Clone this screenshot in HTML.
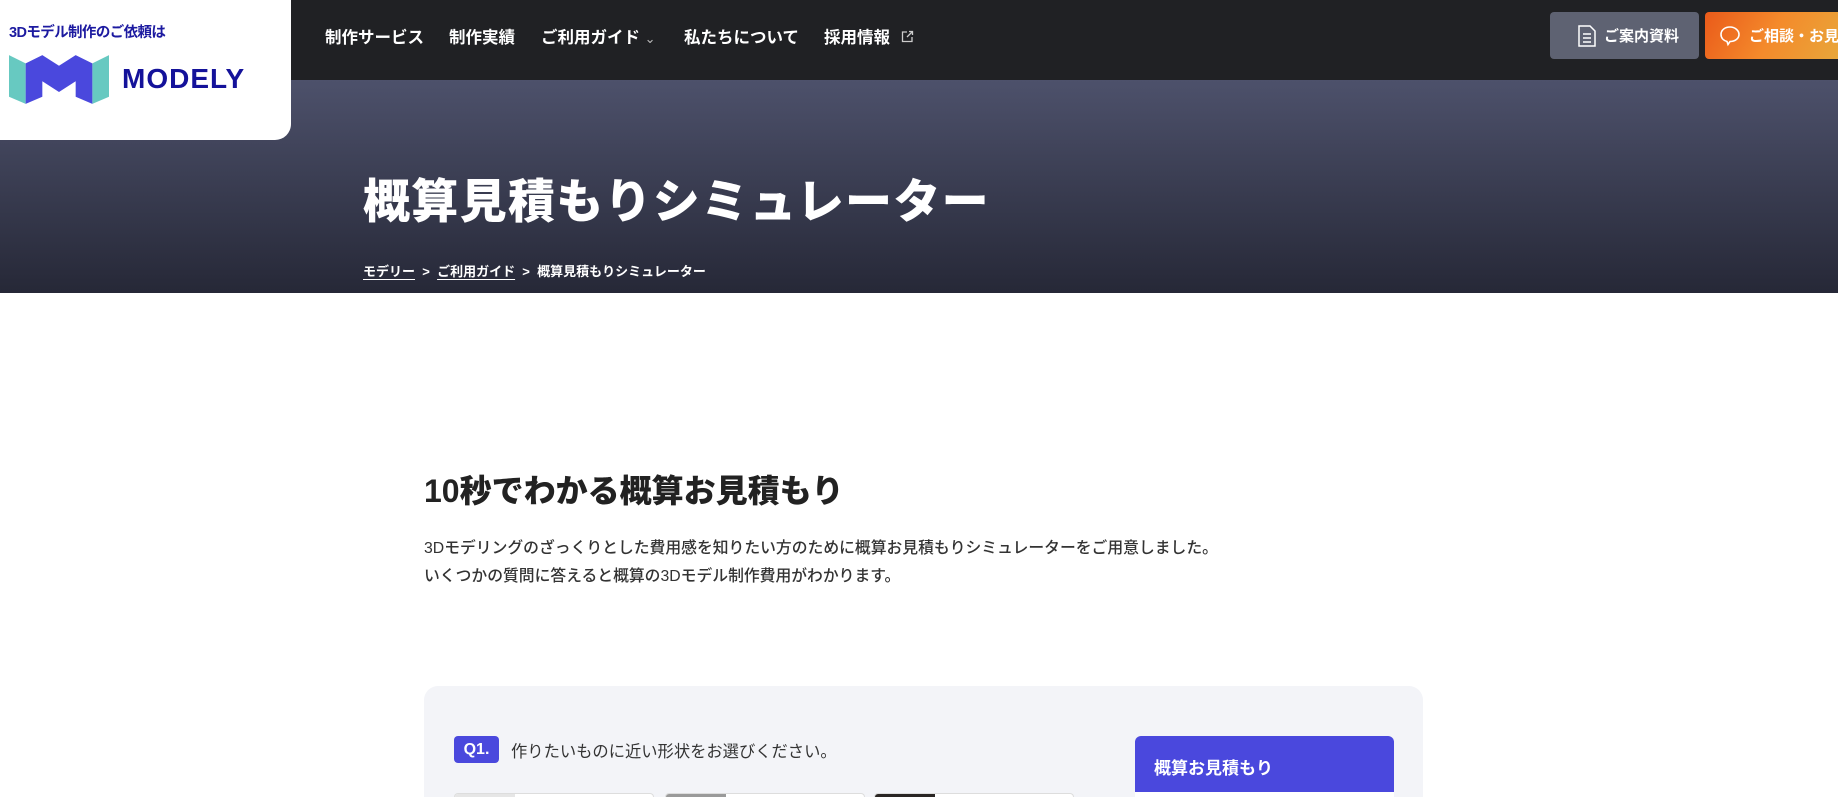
<!DOCTYPE html><html style="height:797px;overflow:hidden"><head><meta charset="utf-8"><style>
*{margin:0;padding:0;box-sizing:border-box}
body{width:1838px;height:797px;overflow:hidden;background:#fff;font-family:"Liberation Sans","Noto Sans CJK JP",sans-serif;position:relative}
.hdr{position:absolute;left:0;top:0;width:1838px;height:80px;background:#202124}
.logo{position:absolute;left:0;top:0;width:291px;height:140px;background:#fff;border-radius:0 0 16px 0;z-index:3}
.tag{position:absolute;left:9px;top:21px;font-size:14.5px;font-weight:700;color:#1c1aa0;letter-spacing:-0.6px}
.brand{position:absolute;left:122px;top:63px;font-size:28px;font-weight:900;color:#14129a;letter-spacing:1px}
.nav{position:absolute;top:24px;color:#fff;font-size:16.5px;font-weight:700}
.btn{position:absolute;top:12px;height:47px;border-radius:4px;color:#fff;font-size:15px;font-weight:700;display:flex;align-items:center;padding-left:28px;gap:8px;overflow:hidden;white-space:nowrap}
.btn svg{flex-shrink:0}
.hero{position:absolute;left:0;top:80px;width:1838px;height:213px;background:linear-gradient(#4d516b,#262837)}
h1{position:absolute;left:363px;top:163px;color:#fff;font-size:47px;font-weight:900;letter-spacing:1.3px}
.bc{position:absolute;left:363px;top:261px;color:#fff;font-size:13px;font-weight:700}
.bc u{text-underline-offset:3px}
h2{position:absolute;left:424px;top:466px;font-size:32px;font-weight:900;color:#222}
.p{position:absolute;left:424px;top:535px;font-size:15.8px;line-height:28px;color:#333;font-weight:500}
.card{position:absolute;left:424px;top:686px;width:999px;height:111px;background:#f3f4f8;border-radius:14px 14px 0 0}
.q{position:absolute;left:454px;top:736px;width:45px;height:27px;background:#4a48dd;color:#fff;border-radius:4px;font-weight:900;font-size:16px;text-align:center;line-height:27px}
.qt{position:absolute;left:511px;top:738px;font-size:16.3px;color:#333}
.side{position:absolute;left:1135px;top:736px;width:259px;height:61px;background:#fff;border-radius:6px 6px 0 0;overflow:hidden}
.side div{height:56px;background:#4a48dd;color:#fff;font-weight:700;font-size:17px;padding:18px 0 0 19px}
.opt{position:absolute;top:793px;width:200px;height:4px;background:#fff;border:1px solid #ddd;border-bottom:0;border-radius:5px 5px 0 0;overflow:hidden}
.opt i{display:block;width:60px;height:4px}
</style></head><body>
<div class="hdr">
<div class="nav" style="left:325px">制作サービス</div>
<div class="nav" style="left:449px">制作実績</div>
<div class="nav" style="left:541px">ご利用ガイド <span style="font-weight:400;font-size:13px;color:#bbb">&#8964;</span></div>
<div class="nav" style="left:684px">私たちについて</div>
<div class="nav" style="left:824px">採用情報 <svg width="13" height="13" viewBox="0 0 13 13" style="margin-left:6px"><path d="M6 2H1.5v9.5H11V7M8 1.5h3.5V5M11.5 1.5L6 7" fill="none" stroke="#ccc" stroke-width="1.3"/></svg></div>
<div class="btn" style="left:1550px;width:149px;background:#5e6272"><svg width="18" height="22" viewBox="0 0 18 22"><path d="M1 1h11l5 5v15H1z" fill="none" stroke="#fff" stroke-width="1.5"/><path d="M5 9h8M5 13h8M5 17h8" stroke="#fff" stroke-width="1.5"/></svg>ご案内資料</div>
<div class="btn" style="left:1705px;width:133px;background:linear-gradient(120deg,#ea5a1a,#f48a2b,#e8a63a);padding-left:14px;border-radius:4px 0 0 4px"><svg width="22" height="22" viewBox="0 0 22 22"><path d="M11 2C6 2 2 5 2 9.5c0 3.5 2.5 6 6 7l1 3 2-3c5 0 9-3 9-7S16 2 11 2z" fill="none" stroke="#fff" stroke-width="1.6"/></svg>ご相談・お見積</div>
</div>
<div class="logo">
<div class="tag">3Dモデル制作のご依頼は</div>
<svg style="position:absolute;left:9px;top:55px" width="100" height="49" viewBox="0 0 84 41"><path d="M0 0l14 7v34L0 35z" fill="#67c9c1"/><path d="M84 0l-14 7v34l14-6z" fill="#67c9c1"/><path d="M14 7L28 0l14 9L56 0l14 7v34l-14-6V22l-14 9-14-9v13l-14 6z" fill="#4a48dd"/></svg>
<div class="brand">MODELY</div>
</div>
<div class="hero"></div>
<h1>概算見積もりシミュレーター</h1>
<div class="bc"><u>モデリー</u> &nbsp;&gt;&nbsp; <u>ご利用ガイド</u> &nbsp;&gt;&nbsp; 概算見積もりシミュレーター</div>
<h2>10秒でわかる概算お見積もり</h2>
<div class="p">3Dモデリングのざっくりとした費用感を知りたい方のために概算お見積もりシミュレーターをご用意しました。<br>いくつかの質問に答えると概算の3Dモデル制作費用がわかります。</div>
<div class="card"></div>
<div class="q">Q1.</div>
<div class="qt">作りたいものに近い形状をお選びください。</div>
<div class="side"><div>概算お見積もり</div></div>
<div class="opt" style="left:454px"><i style="background:#e6e6e6"></i></div>
<div class="opt" style="left:665px"><i style="background:#9a9a9a"></i></div>
<div class="opt" style="left:874px"><i style="background:#2a2624"></i></div>
</body></html>
